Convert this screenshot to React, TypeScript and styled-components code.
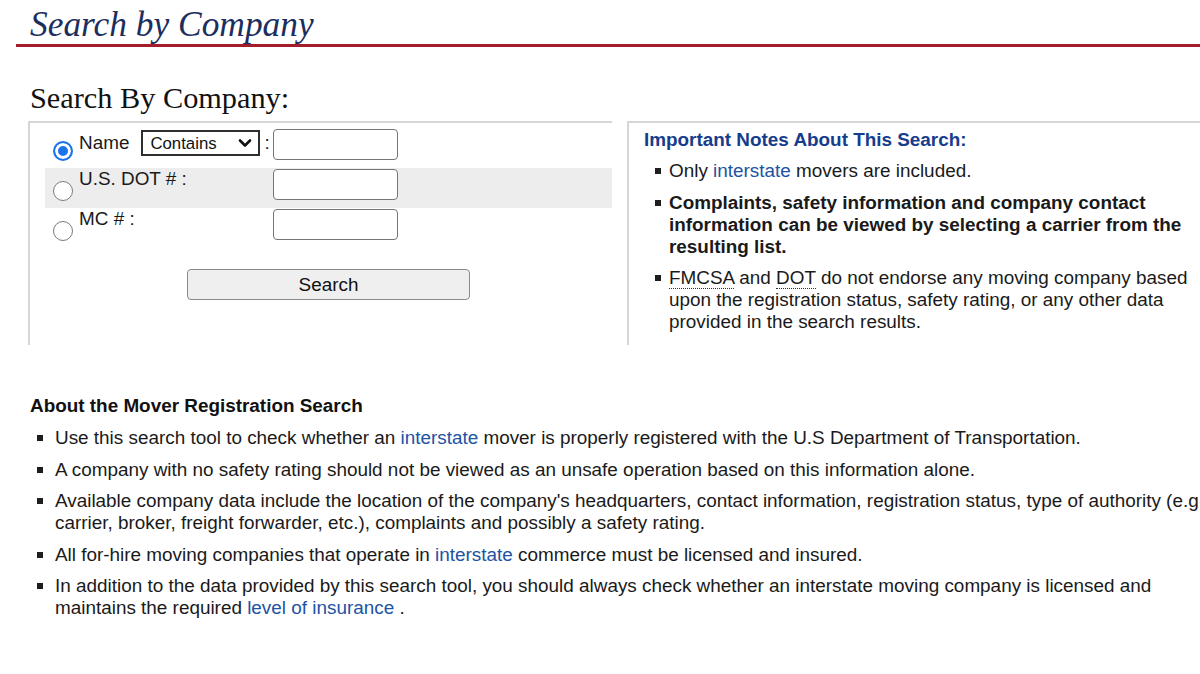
import React from 'react';
import styled, { createGlobalStyle } from 'styled-components';

const GlobalStyle = createGlobalStyle`
  html, body {
    margin: 0;
    padding: 0;
    overflow: hidden;
    background: #fff;
  }
  body {
    font-family: "Liberation Sans", Arial, Helvetica, sans-serif;
    color: #1a1a1a;
  }
`;

const TEXT_SIZE = '18.9px';

const Page = styled.div`
  width: 1220px;
  padding-bottom: 40px;
`;

const Header = styled.header`
  margin-left: 16px;
  padding: 5px 0 0 14px;
  border-bottom: 3px solid #a51c2c;
`;

const Title = styled.h1`
  margin: 0;
  font-family: "Liberation Serif", "Times New Roman", serif;
  font-style: italic;
  font-weight: normal;
  font-size: 35.4px;
  line-height: 39px;
  color: #1c2e5e;
`;

const SubTitle = styled.h2`
  margin: 34px 0 6px 30px;
  font-family: "Liberation Serif", "Times New Roman", serif;
  font-weight: normal;
  font-size: 30.3px;
  line-height: 34px;
  color: #111;
`;

const Panels = styled.div`
  display: grid;
  grid-template-columns: 584px 1fr;
  column-gap: 15px;
  margin-left: 28px;
`;

const Panel = styled.section`
  box-sizing: border-box;
  height: 224px;
  border-top: 2px solid #d6d6d6;
  border-left: 2px solid #d6d6d6;
`;

const FormPanel = styled(Panel)`
  padding: 5px 0 0 15px;
`;

const NotesPanel = styled(Panel)`
  padding: 6px 0 0 15px;
`;

const Row = styled.div<{ $shaded?: boolean }>`
  display: flex;
  align-items: flex-start;
  height: 40px;
  background: ${({ $shaded }) => ($shaded ? '#ededed' : 'transparent')};
`;

const RadioCell = styled.div`
  flex: none;
  width: 34px;
`;

const Radio = styled.span<{ $checked?: boolean }>`
  display: block;
  box-sizing: border-box;
  width: 20px;
  height: 20px;
  margin: 13px 0 0 8px;
  border-radius: 50%;
  border: ${({ $checked }) =>
    $checked ? '2px solid #1c74ec' : '1.5px solid #7a7a7a'};
  background: ${({ $checked }) => ($checked ? '#1c74ec' : '#fff')};
  box-shadow: ${({ $checked }) => ($checked ? 'inset 0 0 0 3px #fff' : 'none')};
`;

const LabelCell = styled.div<{ $offset?: number }>`
  flex: none;
  width: 194px;
  display: flex;
  align-items: center;
  height: 26px;
  margin-top: ${({ $offset }) => $offset ?? 0}px;
`;

const LabelText = styled.span`
  font-size: ${TEXT_SIZE};
  line-height: 22px;
  align-self: flex-start;
`;

const NameText = styled.span`
  font-size: ${TEXT_SIZE};
  line-height: 22px;
`;

const SelectWrap = styled.div`
  position: relative;
  margin-left: 12px;
  width: 119px;
  height: 26px;
`;

const Select = styled.select`
  appearance: none;
  box-sizing: border-box;
  width: 100%;
  height: 100%;
  margin: 0;
  padding: 0 0 0 7px;
  border: 2px solid #2e2e2e;
  border-radius: 0;
  background: #fff;
  font-family: "Liberation Sans", Arial, sans-serif;
  font-size: 16.8px;
  color: #111;
`;

const Chevron = styled.svg`
  position: absolute;
  right: 8px;
  top: 8px;
  pointer-events: none;
`;

const Colon = styled.span`
  margin-left: 4px;
  font-size: ${TEXT_SIZE};
  line-height: 22px;
`;

const TextInput = styled.input`
  box-sizing: border-box;
  width: 125px;
  height: 31px;
  margin: 1px 0 0;
  padding: 0 6px;
  border: 1px solid #767676;
  border-radius: 4px;
  background: #fff;
  font-size: 16px;
`;

const ButtonRow = styled.div`
  margin: 21px 0 0 142px;
`;

const SearchButton = styled.button`
  box-sizing: border-box;
  width: 283px;
  height: 31px;
  border: 1px solid #8a8a8a;
  border-radius: 4px;
  background: #efefef;
  font-family: "Liberation Sans", Arial, sans-serif;
  font-size: ${TEXT_SIZE};
  color: #111;
`;

const NotesTitle = styled.h3`
  margin: 0;
  font-size: ${TEXT_SIZE};
  line-height: 22px;
  font-weight: bold;
  color: #163d8c;
`;

const List = styled.ul<{ $top: number }>`
  list-style: none;
  margin: ${({ $top }) => $top}px 0 0;
  padding: 0;
  display: flex;
  flex-direction: column;
  gap: 9.5px;
`;

const Item = styled.li<{ $bold?: boolean }>`
  display: flex;
  align-items: flex-start;
  font-size: ${TEXT_SIZE};
  line-height: 22px;
  font-weight: ${({ $bold }) => ($bold ? 'bold' : 'normal')};
`;

const Bullet = styled.span<{ $left: number; $right: number }>`
  flex: none;
  width: 6px;
  height: 6px;
  margin: 8px ${({ $right }) => $right}px 0 ${({ $left }) => $left}px;
  background: #1e1e1e;
`;

const Link = styled.a`
  color: #2153a3;
  text-decoration: none;
`;

const Abbr = styled.abbr`
  text-decoration: none;
  border-bottom: 1px dotted #333;
`;

const About = styled.section`
  margin: 50px 0 0 30px;
`;

const AboutTitle = styled.h3`
  margin: 0;
  font-size: ${TEXT_SIZE};
  line-height: 22px;
  font-weight: bold;
  color: #111;
`;

const notes: React.ReactNode[] = [
  <>
    Only <Link href="#">interstate</Link> movers are included.
  </>,
  <>
    Complaints, safety information and company contact information can be
    viewed by selecting a carrier from the resulting list.
  </>,
  <>
    <Abbr title="Federal Motor Carrier Safety Administration">FMCSA</Abbr> and{' '}
    <Abbr title="Department of Transportation">DOT</Abbr> do not endorse any
    moving company based upon the registration status, safety rating, or any
    other data provided in the search results.
  </>,
];

const aboutItems: React.ReactNode[] = [
  <>
    Use this search tool to check whether an <Link href="#">interstate</Link>{' '}
    mover is properly registered with the U.S Department of Transportation.
  </>,
  <>
    A company with no safety rating should not be viewed as an unsafe operation
    based on this information alone.
  </>,
  <>
    Available company data include the location of the company's headquarters,
    contact information, registration status, type of authority (e.g. carrier,
    broker, freight forwarder, etc.), complaints and possibly a safety rating.
  </>,
  <>
    All for-hire moving companies that operate in{' '}
    <Link href="#">interstate</Link> commerce must be licensed and insured.
  </>,
  <>
    In addition to the data provided by this search tool, you should always
    check whether an interstate moving company is licensed and maintains the
    required <Link href="#">level of insurance</Link> .
  </>,
];

const App: React.FC = () => {
  return (
    <Page>
      <GlobalStyle />
      <Header>
        <Title>Search by Company</Title>
      </Header>
      <SubTitle>Search By Company:</SubTitle>

      <Panels>
        <FormPanel>
          <Row>
            <RadioCell>
              <Radio $checked />
            </RadioCell>
            <LabelCell $offset={2}>
              <NameText>Name</NameText>
              <SelectWrap>
                <Select defaultValue="contains">
                  <option value="contains">Contains</option>
                  <option value="starts">Starts With</option>
                </Select>
                <Chevron width="14" height="10" viewBox="0 0 14 10">
                  <polyline
                    points="2,2.5 7,7.5 12,2.5"
                    fill="none"
                    stroke="#111"
                    strokeWidth="2.6"
                    strokeLinecap="round"
                    strokeLinejoin="round"
                  />
                </Chevron>
              </SelectWrap>
              <Colon>:</Colon>
            </LabelCell>
            <TextInput type="text" />
          </Row>
          <Row $shaded>
            <RadioCell>
              <Radio />
            </RadioCell>
            <LabelCell>
              <LabelText>U.S. DOT # :</LabelText>
            </LabelCell>
            <TextInput type="text" />
          </Row>
          <Row>
            <RadioCell>
              <Radio />
            </RadioCell>
            <LabelCell>
              <LabelText>MC # :</LabelText>
            </LabelCell>
            <TextInput type="text" />
          </Row>
          <ButtonRow>
            <SearchButton type="button">Search</SearchButton>
          </ButtonRow>
        </FormPanel>

        <NotesPanel>
          <NotesTitle>Important Notes About This Search:</NotesTitle>
          <List $top={9}>
            {notes.map((note, i) => (
              <Item key={i} $bold={i === 1}>
                <Bullet $left={11} $right={8} />
                <span>{note}</span>
              </Item>
            ))}
          </List>
        </NotesPanel>
      </Panels>

      <About>
        <AboutTitle>About the Mover Registration Search</AboutTitle>
        <List $top={10}>
          {aboutItems.map((item, i) => (
            <Item key={i}>
              <Bullet $left={7} $right={12} />
              <span>{item}</span>
            </Item>
          ))}
        </List>
      </About>
    </Page>
  );
};

export default App;
